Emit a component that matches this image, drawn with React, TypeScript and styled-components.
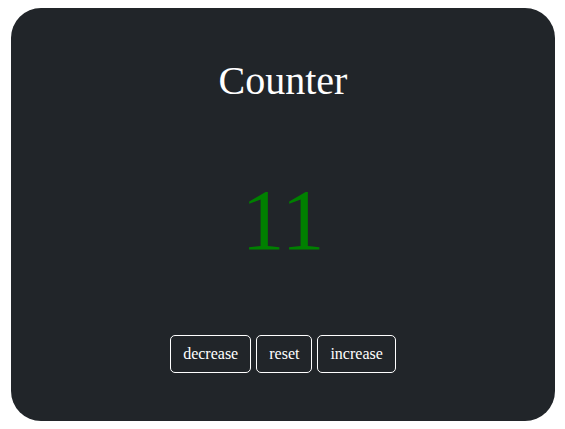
import { useState } from 'react';
import styled, { createGlobalStyle } from 'styled-components';

const GlobalStyle = createGlobalStyle`
  body {
    margin: 0;
    background: #ffffff;
    font-family: "Liberation Serif", "Times New Roman", serif;
  }
`;

const Page = styled('div')`
  padding: 8px 10px 8px 11px;
`;

const Card = styled('div')`
  display: flex;
  flex-direction: column;
  align-items: center;
  width: 544px;
  height: 413px;
  box-sizing: border-box;
  background: #212529;
  border-radius: 30px;
  padding-top: 50px;
`;

const Title = styled('h1')`
  margin: 0;
  color: #ffffff;
  font-size: 40px;
  font-weight: normal;
  line-height: 46px;
`;

const Count = styled('div')<{ $color: string }>`
  margin-top: 66px;
  color: ${(props) => props.$color};
  font-size: 86px;
  line-height: 100px;
`;

const Buttons = styled('div')`
  display: flex;
  gap: 5px;
  margin-top: 65px;
`;

const Button = styled('button')`
  font-family: "Liberation Serif", "Times New Roman", serif;
  font-size: 16px;
  line-height: 18px;
  color: #ffffff;
  background: transparent;
  border: 1px solid #ffffff;
  border-radius: 5px;
  padding: 8px 12px;
  height: 38px;
  cursor: pointer;
`;

export default function App() {
  const [count, setCount] = useState(11);

  const color = count > 0 ? 'green' : count < 0 ? 'red' : '#ffffff';

  return (
    <Page>
      <GlobalStyle />
      <Card>
        <Title>Counter</Title>
        <Count $color={color}>{count}</Count>
        <Buttons>
          <Button onClick={() => setCount(count - 1)}>decrease</Button>
          <Button onClick={() => setCount(0)}>reset</Button>
          <Button onClick={() => setCount(count + 1)}>increase</Button>
        </Buttons>
      </Card>
    </Page>
  );
}
